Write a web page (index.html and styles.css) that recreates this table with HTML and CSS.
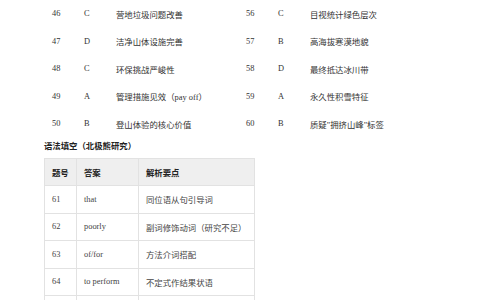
FILE: index.html
```html
<!DOCTYPE html>
<html lang="zh">
<head>
<meta charset="utf-8">
<link rel="stylesheet" href="styles.css">
</head>
<body>
<div class="page">
  <div class="answers">
    <div class="row">
      <span class="c">46</span><span class="c">C</span><span class="c">营地垃圾问题改善</span>
      <span class="c">56</span><span class="c">C</span><span class="c">目视统计绿色层次</span>
    </div>
    <div class="row">
      <span class="c">47</span><span class="c">D</span><span class="c">洁净山体设施完善</span>
      <span class="c">57</span><span class="c">B</span><span class="c">高海拔寒漠地貌</span>
    </div>
    <div class="row">
      <span class="c">48</span><span class="c">C</span><span class="c">环保挑战严峻性</span>
      <span class="c">58</span><span class="c">D</span><span class="c">最终抵达冰川带</span>
    </div>
    <div class="row">
      <span class="c">49</span><span class="c">A</span><span class="c">管理措施见效（pay off）</span>
      <span class="c">59</span><span class="c">A</span><span class="c">永久性积雪特征</span>
    </div>
    <div class="row">
      <span class="c">50</span><span class="c">B</span><span class="c">登山体验的核心价值</span>
      <span class="c">60</span><span class="c">B</span><span class="c">质疑"拥挤山峰"标签</span>
    </div>
  </div>
  <h3 class="heading">语法填空（北极熊研究）</h3>
  <table class="grammar">
    <colgroup><col class="w1"><col class="w2"><col class="w3"></colgroup>
    <thead>
      <tr><th>题号</th><th>答案</th><th>解析要点</th></tr>
    </thead>
    <tbody>
      <tr><td>61</td><td>that</td><td>同位语从句引导词</td></tr>
      <tr><td>62</td><td>poorly</td><td>副词修饰动词（研究不足）</td></tr>
      <tr><td>63</td><td>of/for</td><td>方法介词搭配</td></tr>
      <tr><td>64</td><td>to perform</td><td>不定式作结果状语</td></tr>
      <tr><td></td><td></td><td></td></tr>
    </tbody>
  </table>
</div>
</body>
</html>
```

FILE: styles.css
```css
html, body {
  margin: 0;
  padding: 0;
  background: #ffffff;
}
body {
  font-family: "Liberation Serif", "Noto Sans CJK SC", serif;
  font-size: 8.4px;
  color: #333333;
  overflow: hidden;
}
.page {
  padding-left: 44px;
}
.answers {
  display: flex;
  flex-direction: column;
}
.row {
  display: grid;
  grid-template-columns: 32px 32px 130px 32px 32px 1fr;
  height: 27.5px;
  align-items: center;
}
.c {
  padding-left: 8px;
  white-space: nowrap;
}
.heading {
  margin: 1px 0 3.5px 0;
  height: 16px;
  line-height: 16px;
  font-size: 8.4px;
  font-weight: bold;
  color: #222222;
}
.grammar {
  border-collapse: collapse;
  width: 210px;
  table-layout: fixed;
}
.w1 { width: 32px; }
.w2 { width: 62px; }
.w3 { width: 116px; }
.grammar th,
.grammar td {
  border: 1px solid #e2e2e2;
  padding: 0 0 0 7px;
  text-align: left;
  white-space: nowrap;
  overflow: visible;
}
.grammar th {
  height: 26px;
  background: #efefef;
  font-weight: bold;
  color: #222222;
}
.grammar td {
  height: 26.5px;
  color: #444444;
}
```
